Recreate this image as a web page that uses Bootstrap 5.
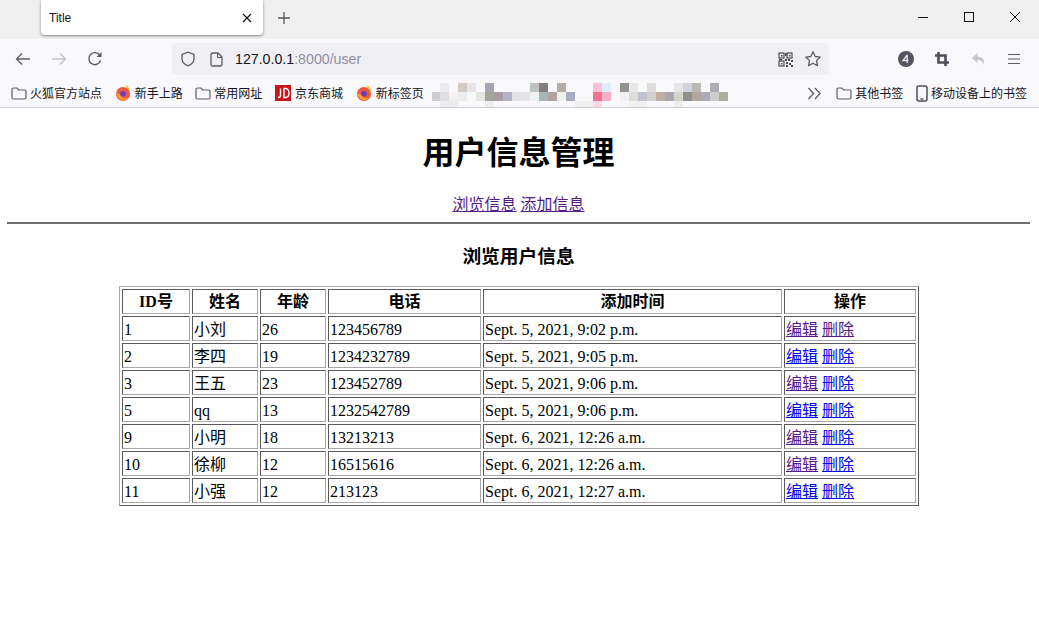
<!DOCTYPE html>
<html lang="zh">
<head>
<meta charset="utf-8">
<title>Title</title>
<link href="https://cdn.jsdelivr.net/npm/bootstrap@5.3.0/dist/css/bootstrap.min.css" rel="stylesheet">
<style>
html,body{height:100%}
body{background:#fff;color:#000;font-family:"Liberation Serif","Noto Sans CJK SC",serif;font-size:16px;overflow:hidden}
.ui{font-family:"Noto Sans CJK SC","Noto Sans",sans-serif}
.tabstrip{height:39px;background:#f0f0f0;padding-right:1px}
.tabpad{width:41px}
.tabitem{width:222px;height:35px;background:#fff;border-radius:0 0 4px 4px;box-shadow:0 1px 3px rgba(0,0,0,.45);font:12px "Liberation Sans",sans-serif;padding:0 11px 0 8px;color:#15141a}
.newtab{width:42px;height:35px}
.wbtn{width:46px;height:33px}
.toolbar{height:40px;background:#f9f9fb;padding:0 7px 0 5px}
.navbtn{width:36px;height:32px}
.urlbar{width:657px;height:32px;background:#f0f0f4;border-radius:4px;margin-left:59px;padding:0 7px 0 8px;font:14.2px "Liberation Sans",sans-serif;color:#15141a}
.urlgrey{color:#8f8f9d}
.docico{margin-left:14px}
.urltext{margin-left:12px}
.starico{margin-left:11px}
.tbright{width:36px;height:32px}
.bookmarks{height:29px;background:#f9f9fb;border-bottom:1px solid #cfcfd8;font-size:12px;color:#15141a;padding-left:11px}
.bmk{gap:4px;white-space:nowrap;line-height:16px;margin-right:12.67px}
.bmkfolder{gap:3px}
.bmklast{gap:3px;margin-right:12px}
.pixels{width:300px;height:24px;margin-left:-4px;margin-top:3px}
.chevrons{margin-right:14px}
.pagebody{padding:0 8px}
.pagebody a{color:#0000ee}
.pagebody a.seen{color:#551a8b}
.pagetitle{font-family:"Liberation Sans","Noto Sans CJK SC",sans-serif;font-size:32px;font-weight:700;text-align:center;line-height:37px;margin:27px 2px 24px 0}
.toplinks{text-align:center;line-height:18px;margin:0 2px 8px 0}
.rule{height:2px;background:#6e6e6e;opacity:1;border:0;margin:0 1px 0 -1px}
.subtitle{font-family:"Liberation Sans","Noto Sans CJK SC",sans-serif;font-size:18.72px;font-weight:700;text-align:center;line-height:22px;margin:22px 2px 18px 0}
.usertable{table-layout:fixed;width:799px;margin:0 auto 0 111px;border-collapse:separate;border-spacing:2px;border:1px solid;border-color:#a8a8a8 #5a5a5a #5a5a5a #a8a8a8}
.usertable th,.usertable td{border:1px solid;border-color:#5a5a5a #a8a8a8 #a8a8a8 #5a5a5a;padding:2px 1px 0;line-height:21px;white-space:nowrap;overflow:hidden}
.usertable th{font-size:16px;text-align:center;font-weight:700;padding:1px 1px 0;line-height:22px}
</style>
</head>
<body>
<div class="tabstrip ui d-flex align-items-start">
  <div class="tabpad"></div>
  <div class="tabitem d-flex align-items-center justify-content-between">
    <span>Title</span>
    <svg width="10" height="10" viewBox="0 0 10 10"><path d="M1 1l8 8M9 1l-8 8" stroke="#15141a" stroke-width="1.2"/></svg>
  </div>
  <div class="newtab d-flex align-items-center justify-content-center">
    <svg width="14" height="14" viewBox="0 0 14 14"><path d="M7 1v12M1 7h12" stroke="#55555f" stroke-width="1.3"/></svg>
  </div>
  <div class="flex-grow-1"></div>
  <div class="wbtn d-flex align-items-center justify-content-center"><svg width="12" height="12" viewBox="0 0 12 12"><path d="M1 6.500h10" stroke="#111" stroke-width="1"/></svg></div>
  <div class="wbtn d-flex align-items-center justify-content-center"><svg width="12" height="12" viewBox="0 0 12 12"><rect x="1.500" y="1.500" width="9" height="9" fill="none" stroke="#111" stroke-width="1"/></svg></div>
  <div class="wbtn d-flex align-items-center justify-content-center"><svg width="12" height="12" viewBox="0 0 12 12"><path d="M1 1l10 10M11 1L1 11" stroke="#111" stroke-width="1"/></svg></div>
</div>
<div class="toolbar d-flex align-items-center">
  <div class="navbtn d-flex align-items-center justify-content-center"><svg width="16" height="14" viewBox="0 0 16 14"><path d="M15 7H1.500M7 1.500L1.500 7 7 12.500" fill="none" stroke="#5b5b66" stroke-width="1.300"/></svg></div>
  <div class="navbtn d-flex align-items-center justify-content-center"><svg width="16" height="14" viewBox="0 0 16 14"><path d="M1 7h13.500M9 1.500L14.500 7 9 12.500" fill="none" stroke="#c2c2c8" stroke-width="1.300"/></svg></div>
  <div class="navbtn d-flex align-items-center justify-content-center"><svg width="16" height="16" viewBox="0 0 16 16"><path d="M13.600 9.500A6 6 0 1 1 12.300 3.600" fill="none" stroke="#5b5b66" stroke-width="1.400"/><path d="M14.500 1v5h-5z" fill="#5b5b66"/></svg></div>
  <div class="urlbar d-flex align-items-center">
    <svg width="16" height="16" viewBox="0 0 16 16"><path d="M8 1.200l6 2.200v4.300c0 3.500-2.500 5.800-6 7.100-3.500-1.300-6-3.600-6-7.100V3.400z" fill="none" stroke="#5b5b66" stroke-width="1.300"/></svg>
    <svg class="docico" width="13" height="15" viewBox="0 0 13 15"><path d="M1 2.500a1.500 1.500 0 0 1 1.500-1.500H8l4 4v7.500a1.500 1.500 0 0 1-1.500 1.500h-8A1.500 1.500 0 0 1 1 12.500z" fill="none" stroke="#5b5b66" stroke-width="1.300"/><path d="M7.500 1v4.500H12" fill="none" stroke="#5b5b66" stroke-width="1"/></svg>
    <span class="urltext">127.0.0.1<span class="urlgrey">:8000/user</span></span>
    <span class="flex-grow-1"></span>
    <svg width="15" height="15" viewBox="0 0 15 15"><g fill="none" stroke="#4a4a52" stroke-width="1.200"><rect x="1" y="1" width="5" height="5"/><rect x="9" y="1" width="5" height="5"/><rect x="1" y="9" width="5" height="5"/></g><g fill="#4a4a52"><rect x="3" y="3" width="1.500" height="1.500"/><rect x="11" y="3" width="1.500" height="1.500"/><rect x="3" y="11" width="1.500" height="1.500"/><rect x="7" y="1" width="1.500" height="3"/><rect x="7" y="7" width="2" height="2"/><rect x="10" y="7" width="2" height="2"/><rect x="13" y="8" width="2" height="2"/><rect x="8" y="10" width="2" height="2"/><rect x="11" y="11" width="2" height="2"/><rect x="8" y="13" width="2" height="2"/><rect x="13" y="13" width="2" height="2"/><rect x="1" y="7" width="3" height="1.500"/></g></svg>
    <svg class="starico" width="18" height="18" viewBox="0 0 18 18"><path d="M9 1.800l2.200 4.700 5 .6-3.700 3.500 1 5.100L9 13.200l-4.500 2.500 1-5.100L1.800 7.100l5-.6z" fill="none" stroke="#5b5b66" stroke-width="1.300" stroke-linejoin="round"/></svg>
  </div>
  <div class="flex-grow-1"></div>
  <div class="tbright d-flex align-items-center justify-content-center"><svg width="16" height="16" viewBox="0 0 16 16"><circle cx="8" cy="8" r="8" fill="#55535f"/><path d="M9.200 4v8M9.200 4L5 9.500h5.500" fill="none" stroke="#e8e8ec" stroke-width="1.300"/></svg></div>
  <div class="tbright d-flex align-items-center justify-content-center"><svg width="14" height="14" viewBox="0 0 14 14"><path d="M3.500 0v10.500H14M0 3.500h10.500V14" fill="none" stroke="#4f4f58" stroke-width="2.600"/></svg></div>
  <div class="tbright d-flex align-items-center justify-content-center"><svg width="15" height="15" viewBox="0 0 15 15"><path d="M6.500 1L.8 6l5.700 5V8c3 0 5 1 6 5 1.500-5-.5-8.500-6-8.500z" fill="#c8c8cc"/></svg></div>
  <div class="tbright d-flex align-items-center justify-content-center"><svg width="14" height="12" viewBox="0 0 14 12"><path d="M1 1.500h12M1 6h12M1 10.500h12" stroke="#5b5b66" stroke-width="1.200"/></svg></div>
</div>
<div class="bookmarks ui d-flex align-items-center">
  <div class="bmk bmkfolder d-flex align-items-center"><svg width="16" height="13" viewBox="0 0 16 13"><path d="M1 2.500A1.500 1.500 0 0 1 2.500 1h3.300l2 2h5.700A1.500 1.500 0 0 1 15 4.500v6a1.500 1.500 0 0 1-1.500 1.500h-11A1.500 1.500 0 0 1 1 10.500z" fill="none" stroke="#5b5b66" stroke-width="1.200"/></svg><span>火狐官方站点</span></div>
  <div class="bmk d-flex align-items-center"><svg width="16" height="16" viewBox="0 0 16 16"><circle cx="8" cy="9" r="7" fill="#f0573e"/><path d="M8 2c3 0 6 2 7 6 .300-3-1-6-3.500-8 .300 2-1 2.500-3.500 2z" fill="#ffc02d"/><path d="M1.200 8c1 5 4 7 7 7 2 0 4-1 5-2.500-3 1.500-7 .5-8-2.500-1-1.500-3-1-4-2z" fill="#f8a12d"/><circle cx="8" cy="8.700" r="2.800" fill="#6b3bc2"/></svg><span>新手上路</span></div>
  <div class="bmk bmkfolder d-flex align-items-center"><svg width="16" height="13" viewBox="0 0 16 13"><path d="M1 2.500A1.500 1.500 0 0 1 2.500 1h3.300l2 2h5.700A1.500 1.500 0 0 1 15 4.500v6a1.500 1.500 0 0 1-1.500 1.500h-11A1.500 1.500 0 0 1 1 10.500z" fill="none" stroke="#5b5b66" stroke-width="1.200"/></svg><span>常用网址</span></div>
  <div class="bmk d-flex align-items-center"><svg width="16" height="16" viewBox="0 0 16 16"><rect width="16" height="16" fill="#c9151e"/><path d="M5.500 3.500v7c0 1.500-1 2-2.500 2M9 3.500v9h1.500c2 0 3.500-1.500 3.500-4.500s-1.500-4.500-3.500-4.500z" fill="none" stroke="#fff" stroke-width="1.400"/></svg><span>京东商城</span></div>
  <div class="bmk d-flex align-items-center"><svg width="16" height="16" viewBox="0 0 16 16"><circle cx="8" cy="9" r="7" fill="#f0573e"/><path d="M8 2c3 0 6 2 7 6 .300-3-1-6-3.500-8 .300 2-1 2.500-3.500 2z" fill="#ffc02d"/><path d="M1.200 8c1 5 4 7 7 7 2 0 4-1 5-2.500-3 1.500-7 .5-8-2.500-1-1.500-3-1-4-2z" fill="#f8a12d"/><circle cx="8" cy="8.700" r="2.800" fill="#6b3bc2"/></svg><span>新标签页</span></div>
  <svg class="pixels" viewBox="0 0 300 24" shape-rendering="crispEdges">
    <g>
      <rect x="8" y="0" width="9" height="9" fill="#ecebf0"/><rect x="26" y="0" width="9" height="9" fill="#d3cbc3"/><rect x="35" y="0" width="9" height="9" fill="#e6e4e8"/><rect x="53" y="0" width="9" height="9" fill="#a5a4b2"/><rect x="98" y="0" width="9" height="9" fill="#bcc3c1"/><rect x="107" y="0" width="9" height="9" fill="#847d80"/><rect x="125" y="0" width="9" height="9" fill="#b5adaa"/><rect x="161" y="0" width="9" height="9" fill="#f6c3d8"/><rect x="170" y="0" width="9" height="9" fill="#e0edf9"/><rect x="188" y="0" width="9" height="9" fill="#8f9492"/><rect x="197" y="0" width="9" height="9" fill="#e8e8e8"/><rect x="215" y="0" width="9" height="9" fill="#e0dcdc"/><rect x="242" y="0" width="9" height="9" fill="#e6e6ea"/><rect x="251" y="0" width="9" height="9" fill="#d0d2dc"/><rect x="260" y="0" width="9" height="9" fill="#bab8b4"/><rect x="278" y="0" width="9" height="9" fill="#b0acb4"/>
      <rect x="0" y="9" width="9" height="9" fill="#cdcdd4"/><rect x="8" y="9" width="9" height="9" fill="#dedee4"/><rect x="17" y="9" width="9" height="9" fill="#f3f0ee"/><rect x="26" y="9" width="9" height="9" fill="#ecedf0"/><rect x="44" y="9" width="9" height="9" fill="#e4e4e0"/><rect x="53" y="9" width="9" height="9" fill="#a4a49c"/><rect x="62" y="9" width="9" height="9" fill="#a89ca4"/><rect x="71" y="9" width="9" height="9" fill="#b4b4c4"/><rect x="80" y="9" width="9" height="9" fill="#e2e2e6"/><rect x="89" y="9" width="9" height="9" fill="#e2e6ea"/><rect x="98" y="9" width="9" height="9" fill="#eff0f0"/><rect x="107" y="9" width="9" height="9" fill="#a8b4b6"/><rect x="116" y="9" width="9" height="9" fill="#b0a4a0"/><rect x="125" y="9" width="9" height="9" fill="#eef0f0"/><rect x="134" y="9" width="9" height="9" fill="#a8acc0"/><rect x="161" y="9" width="9" height="9" fill="#f27090"/><rect x="170" y="9" width="9" height="9" fill="#f6b0c6"/><rect x="188" y="9" width="9" height="9" fill="#f0f2f2"/><rect x="197" y="9" width="9" height="9" fill="#e0dcd8"/><rect x="206" y="9" width="9" height="9" fill="#c0c2d0"/><rect x="215" y="9" width="9" height="9" fill="#d2d0cc"/><rect x="224" y="9" width="9" height="9" fill="#c0aea4"/><rect x="233" y="9" width="9" height="9" fill="#a8a8b4"/><rect x="242" y="9" width="9" height="9" fill="#d4d4c8"/><rect x="251" y="9" width="9" height="9" fill="#8e908a"/><rect x="260" y="9" width="9" height="9" fill="#b0a8a0"/><rect x="269" y="9" width="9" height="9" fill="#acaab4"/><rect x="278" y="9" width="9" height="9" fill="#ccccca"/><rect x="287" y="9" width="9" height="9" fill="#acaea0"/>
      <rect x="8" y="18" width="18" height="6" fill="#ebebf0"/><rect x="53" y="18" width="9" height="6" fill="#eeeeec"/><rect x="143" y="18" width="27" height="6" fill="#f0f0f0"/><rect x="161" y="18" width="9" height="6" fill="#f8d8e2"/><rect x="197" y="18" width="18" height="6" fill="#f2f0f0"/><rect x="242" y="18" width="9" height="6" fill="#eeeeec"/>
    </g>
  </svg>
  <div class="flex-grow-1"></div>
  <svg class="chevrons" width="15" height="13" viewBox="0 0 15 13"><path d="M1.500 1l5 5.500-5 5.500M8 1l5 5.500-5 5.500" fill="none" stroke="#5b5b66" stroke-width="1.300"/></svg>
  <div class="bmk bmkfolder d-flex align-items-center"><svg width="16" height="13" viewBox="0 0 16 13"><path d="M1 2.500A1.500 1.500 0 0 1 2.500 1h3.300l2 2h5.700A1.500 1.500 0 0 1 15 4.500v6a1.500 1.500 0 0 1-1.500 1.500h-11A1.500 1.500 0 0 1 1 10.500z" fill="none" stroke="#5b5b66" stroke-width="1.200"/></svg><span>其他书签</span></div>
  <div class="bmk bmklast d-flex align-items-center"><svg width="12" height="17" viewBox="0 0 12 17"><rect x="1" y="1" width="10" height="15" rx="2" fill="none" stroke="#4f4f58" stroke-width="1.500"/><path d="M4.500 14h3" stroke="#4f4f58" stroke-width="1.500"/></svg><span>移动设备上的书签</span></div>
</div>
<main class="pagebody">
  <h2 class="pagetitle">用户信息管理</h2>
  <div class="toplinks"><a class="seen" href="#">浏览信息</a> <a class="seen" href="#">添加信息</a></div>
  <hr class="rule">
  <h3 class="subtitle">浏览用户信息</h3>
  <table class="usertable">
    <colgroup><col style="width:68px"><col style="width:66px"><col style="width:66px"><col style="width:153px"><col style="width:299px"><col style="width:132px"></colgroup>
    <thead><tr><th>ID号</th><th>姓名</th><th>年龄</th><th>电话</th><th>添加时间</th><th>操作</th></tr></thead>
    <tbody>
      <tr><td>1</td><td>小刘</td><td>26</td><td>123456789</td><td>Sept. 5, 2021, 9:02 p.m.</td><td><a class="seen" href="#">编辑</a> <a class="seen" href="#">删除</a></td></tr>
      <tr><td>2</td><td>李四</td><td>19</td><td>1234232789</td><td>Sept. 5, 2021, 9:05 p.m.</td><td><a href="#">编辑</a> <a href="#">删除</a></td></tr>
      <tr><td>3</td><td>王五</td><td>23</td><td>123452789</td><td>Sept. 5, 2021, 9:06 p.m.</td><td><a class="seen" href="#">编辑</a> <a href="#">删除</a></td></tr>
      <tr><td>5</td><td>qq</td><td>13</td><td>1232542789</td><td>Sept. 5, 2021, 9:06 p.m.</td><td><a href="#">编辑</a> <a href="#">删除</a></td></tr>
      <tr><td>9</td><td>小明</td><td>18</td><td>13213213</td><td>Sept. 6, 2021, 12:26 a.m.</td><td><a class="seen" href="#">编辑</a> <a href="#">删除</a></td></tr>
      <tr><td>10</td><td>徐柳</td><td>12</td><td>16515616</td><td>Sept. 6, 2021, 12:26 a.m.</td><td><a class="seen" href="#">编辑</a> <a href="#">删除</a></td></tr>
      <tr><td>11</td><td>小强</td><td>12</td><td>213123</td><td>Sept. 6, 2021, 12:27 a.m.</td><td><a href="#">编辑</a> <a href="#">删除</a></td></tr>
    </tbody>
  </table>
</main>
<script src="https://cdn.jsdelivr.net/npm/bootstrap@5.3.0/dist/js/bootstrap.bundle.min.js"></script>
</body>
</html>
